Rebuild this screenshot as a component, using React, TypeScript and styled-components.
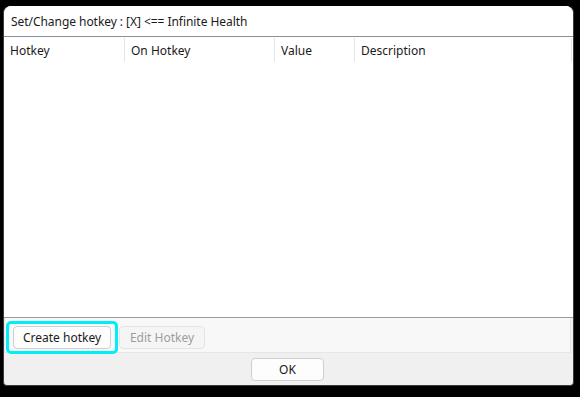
import { createGlobalStyle, styled } from "styled-components";

const GlobalStyle = createGlobalStyle`
  html, body {
    margin: 0;
    padding: 0;
    background: #000;
  }
  body {
    font-family: "Noto Sans", "Segoe UI", Arial, sans-serif;
    font-size: 12px;
    color: #1a1a1a;
  }
`;

const Screen = styled.div`
  width: 580px;
  height: 397px;
  padding: 5px 0 0 3px;
  box-sizing: border-box;
  background: #000;
`;

const Window = styled.div`
  width: 571px;
  height: 381px;
  display: flex;
  flex-direction: column;
  background: #f0f0f0;
  border-radius: 8px 8px 4px 4px;
  overflow: hidden;
  box-sizing: border-box;
  border: 1px solid #3c3c3c;
  border-top-color: #000;
`;

const TitleBar = styled.div`
  height: 30px;
  flex: none;
  display: flex;
  align-items: center;
  padding-left: 7px;
  background: #fff;
  border-bottom: 1px solid #8a9099;
  letter-spacing: -0.05px;
`;

const ListView = styled.div`
  flex: 1;
  display: flex;
  flex-direction: column;
  background: #fff;
  border-bottom: 1px solid #9a9a9a;
`;

const HeaderRow = styled.div`
  height: 25px;
  display: grid;
  grid-template-columns: 121px 150px 80px 1fr;
  padding-right: 1px;
`;

const HeaderCell = styled.div`
  display: flex;
  align-items: center;
  padding-left: 6px;
  margin: 1px 0 0;
  border-right: 1px solid #e5e5e5;
`;

const ButtonPanel = styled.div`
  height: 35px;
  flex: none;
  margin: 0 2px 0 0;
  display: flex;
  align-items: flex-start;
  gap: 1px;
  padding: 3px 0 0 9px;
  box-sizing: border-box;
  background: #f8f8f8;
  border: 1px solid #e6e6e6;
  border-top: none;
`;

const FocusRing = styled.div`
  display: flex;
  padding: 2px 4px;
  margin-left: -8px;
  border: 3px solid #00eef8;
  border-radius: 5px;
`;

const Button = styled.button<{ $disabled?: boolean; $width: number }>`
  width: ${(p) => p.$width}px;
  height: 23px;
  padding: 0;
  font-family: inherit;
  font-size: 12px;
  border-radius: 4px;
  border: 1px solid ${(p) => (p.$disabled ? "#e4e4e4" : "#cfcfcf")};
  background: ${(p) => (p.$disabled ? "#f5f5f5" : "#fdfdfd")};
  color: ${(p) => (p.$disabled ? "#9d9d9d" : "#1a1a1a")};
  box-sizing: border-box;
`;

const PanelButton = styled(Button)`
  margin-top: 5px;
`;

const Footer = styled.div`
  height: 32px;
  flex: none;
  display: flex;
  justify-content: center;
  align-items: center;
  padding-right: 2px;
`;

export default function App() {
  return (
    <>
      <GlobalStyle />
      <Screen>
        <Window>
          <TitleBar>Set/Change hotkey : [X] &lt;== Infinite Health</TitleBar>
          <ListView>
            <HeaderRow>
              <HeaderCell>Hotkey</HeaderCell>
              <HeaderCell>On Hotkey</HeaderCell>
              <HeaderCell>Value</HeaderCell>
              <HeaderCell>Description</HeaderCell>
            </HeaderRow>
          </ListView>
          <ButtonPanel>
            <FocusRing>
              <Button $width={98}>Create hotkey</Button>
            </FocusRing>
            <PanelButton $width={86} $disabled>
              Edit Hotkey
            </PanelButton>
          </ButtonPanel>
          <Footer>
            <Button $width={73}>OK</Button>
          </Footer>
        </Window>
      </Screen>
    </>
  );
}
